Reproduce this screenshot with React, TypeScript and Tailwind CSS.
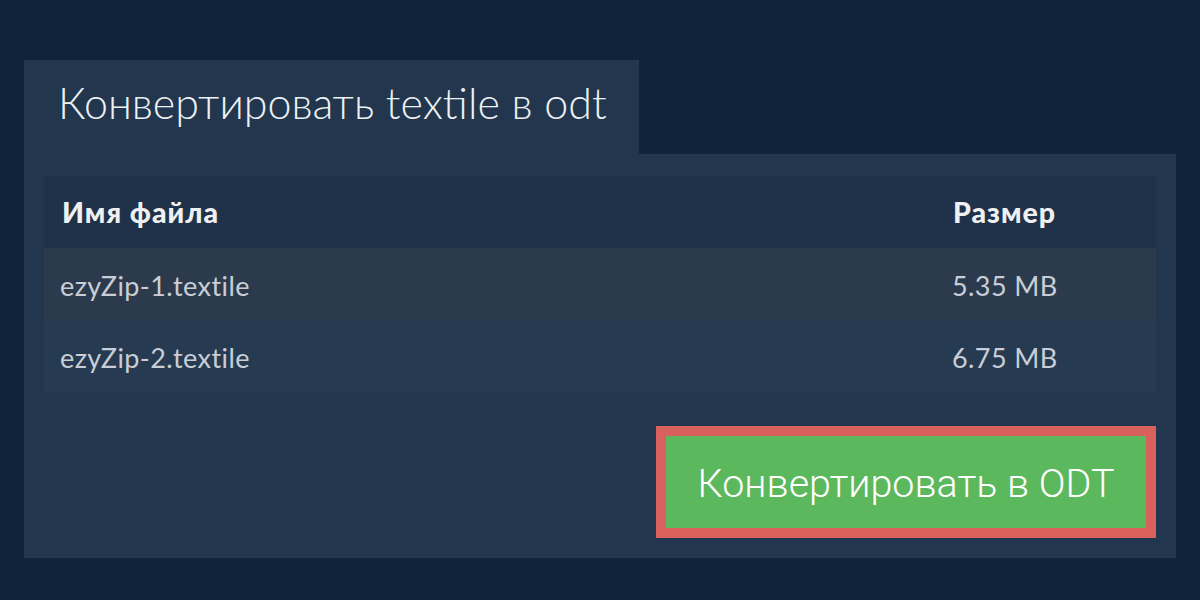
const files = [
  { name: "ezyZip-1.textile", size: "5.35 MB", bg: "bg-[#2b3b4d]" },
  { name: "ezyZip-2.textile", size: "6.75 MB", bg: "bg-[#263a52]" },
];

export default function App() {
  return (
    <div
      className="h-[600px] w-full bg-[#0f2339] px-[24px] pt-[60px]"
      style={{ fontFamily: "Lato, 'Noto Sans', sans-serif" }}
    >
      <div className="flex h-[94px] w-[615px] items-center bg-[#22364e] pb-[8px] pl-[34px]">
        <h1 className="text-[43px] font-light text-[#eef1f4]">
          Конвертировать textile в odt
        </h1>
      </div>

      <section className="h-[404px] bg-[#22364e] px-[20px] pt-[22px]">
        <div className="flex h-[72px] items-center bg-[#1f3249] text-[28.5px] font-black tracking-[1px] text-[#eef0f2]">
          <div className="flex-1 pl-[18px]">Имя файла</div>
          <div className="w-[221px] pl-[18px]">Размер</div>
        </div>
        {files.map((f) => (
          <div
            key={f.name}
            className={`flex h-[72px] items-center pt-[4px] text-[27px] tracking-[0.4px] text-[#c9ced6] ${f.bg}`}
          >
            <div className="flex-1 pl-[16px]">{f.name}</div>
            <div className="w-[221px] pl-[17px]">{f.size}</div>
          </div>
        ))}

        <div className="mt-[34px] flex justify-end">
          <button
            className="flex h-[112px] w-[500px] items-center justify-center border-[10px] border-[#d9605c] bg-[#5cb85c] pt-[4px] text-[39.5px] font-light text-white"
            style={{ fontFamily: "Roboto, sans-serif" }}
          >
            Конвертировать в ODT
          </button>
        </div>
      </section>
    </div>
  );
}
